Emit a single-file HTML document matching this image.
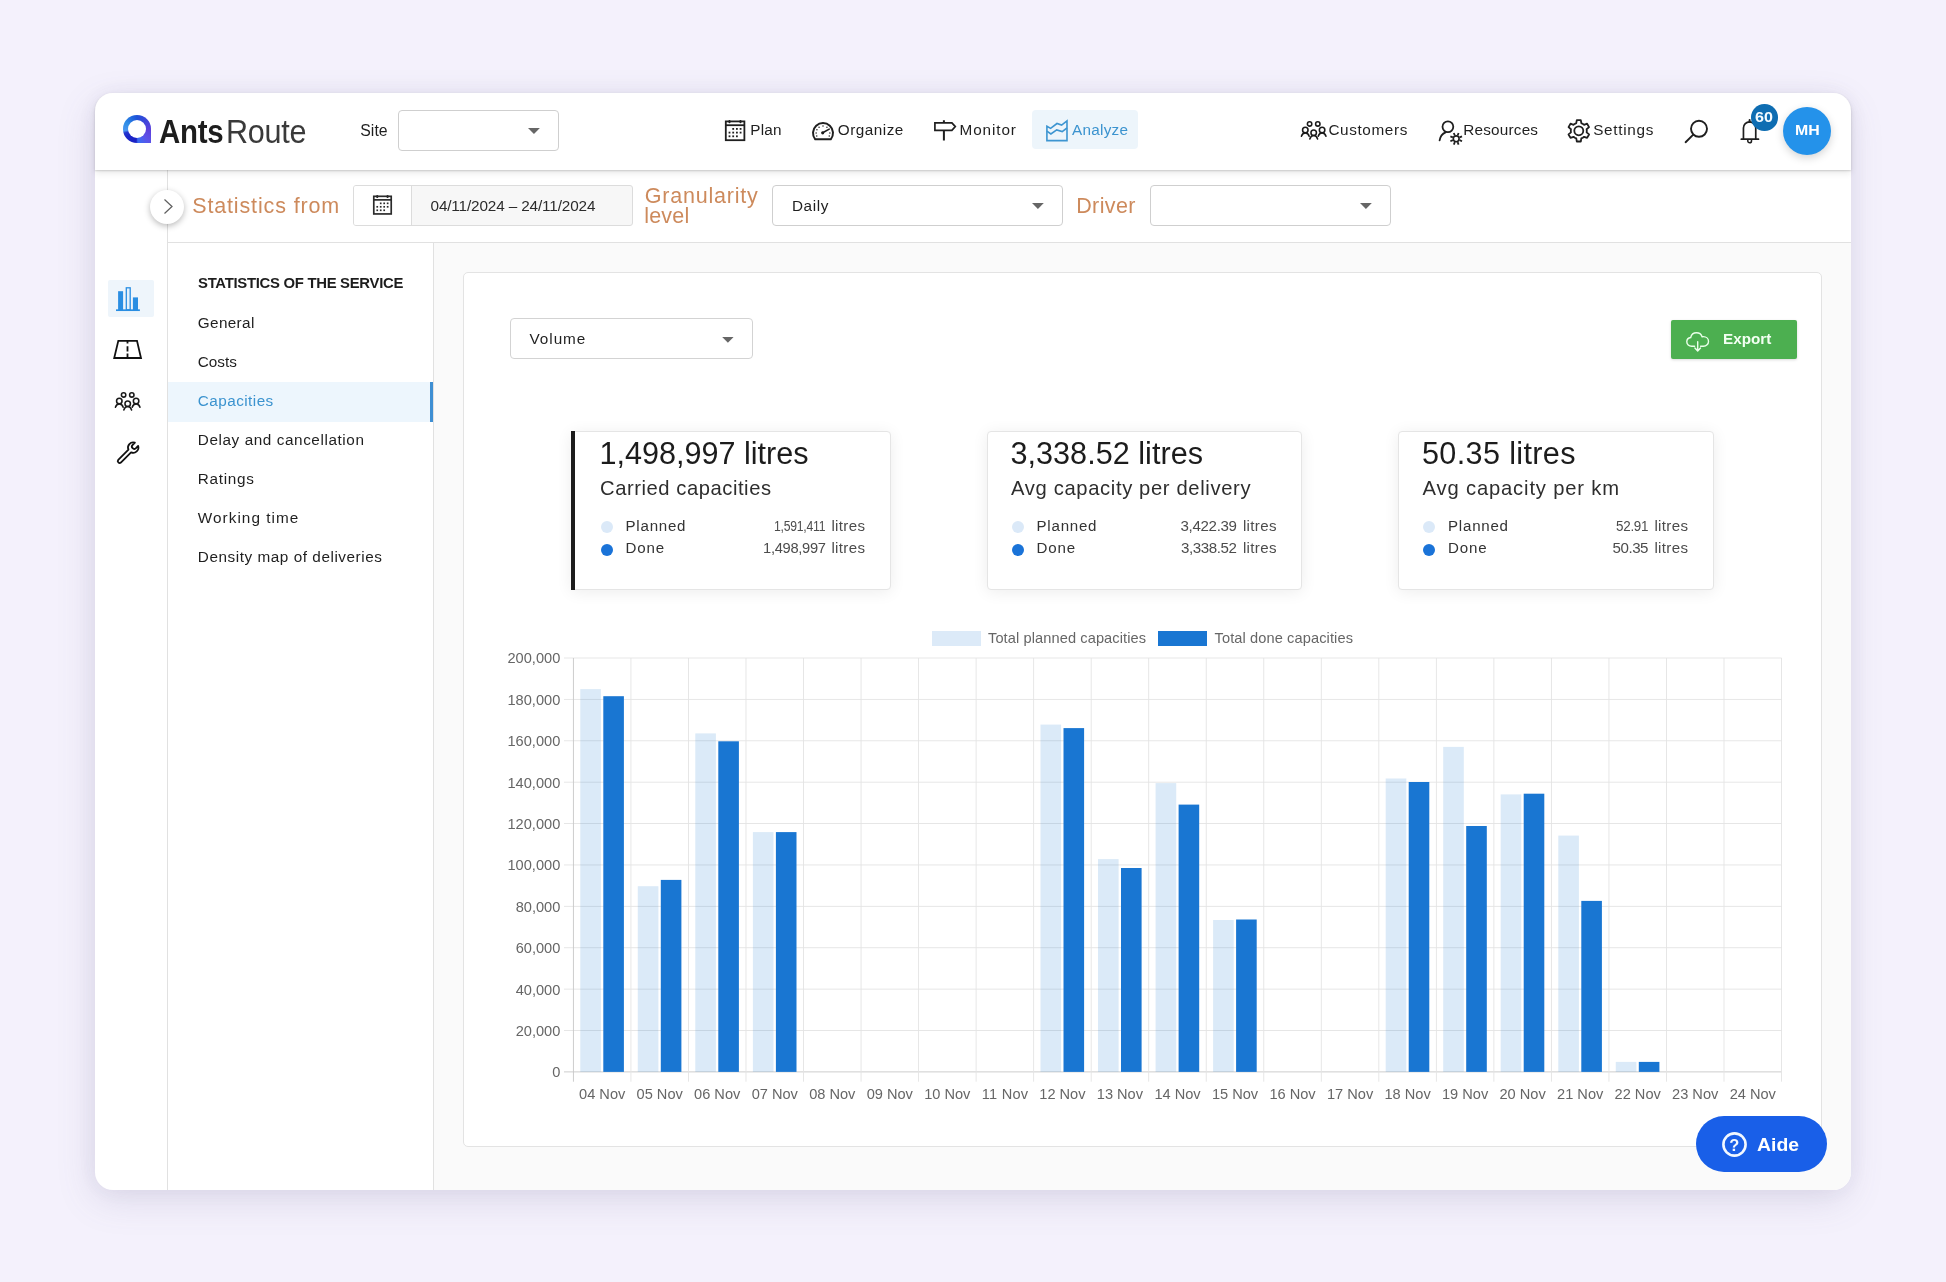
<!DOCTYPE html>
<html lang="en"><head><meta charset="utf-8"><title>AntsRoute - Statistics</title>
<style>
*{margin:0;padding:0;box-sizing:border-box}
html,body{width:1946px;height:1282px;overflow:hidden;font-family:"Liberation Sans",sans-serif}
body{position:relative;will-change:transform;background:#f4f1fc;font-family:"Liberation Sans",sans-serif;color:#222}
body>div,body>svg{position:absolute}
.t{position:absolute;white-space:nowrap;line-height:1;display:block}
svg{overflow:visible}

</style></head>
<body>
<div style="left:95px;top:93px;width:1756px;height:1097px;background:#fff;border-radius:18px;box-shadow:-3px 11px 36px rgba(100,96,140,.15),0 0 24px rgba(100,96,140,.07);"></div>
<div style="left:434px;top:243px;width:1417px;height:947px;background:#fafafa;border-bottom-right-radius:18px;"></div>
<div style="left:167px;top:170px;width:1px;height:1020px;background:#e1e1e1;"></div>
<div style="left:433px;top:243px;width:1px;height:947px;background:#e1e1e1;"></div>
<div style="left:168px;top:242px;width:1683px;height:1px;background:#e1e1e1;"></div>
<div style="left:95px;top:93px;width:1756px;height:77px;background:#fff;border-radius:18px 18px 0 0;box-shadow:0 1px 2px rgba(0,0,0,.15),0 3px 7px rgba(0,0,0,.09);"></div>
<div style="left:122.9px;top:114.9px;width:28.3px;height:27.7px;border-radius:50% 50% 0 50%;background:conic-gradient(from 0deg at 50% 50%,#1f52d8 0deg,#3d45d9 45deg,#5e40dc 95deg,#5c52e8 135deg,#4068f2 165deg,#3a6cf0 176deg,#1a20c4 184deg,#1c26c8 230deg,#2436d0 252deg,#4a96f0 262deg,#2f8ee6 300deg,#2068de 335deg,#1f52d8 360deg);"></div>
<div style="left:127.9px;top:119.6px;width:18.2px;height:18.2px;border-radius:50%;background:#fff;"></div>
<span class="t" style="font-size: 32.3px; color: rgb(29, 29, 29); font-weight: 700; letter-spacing: -0.3px; left: 158.6px; top: 116px; transform-origin: 0px 0px; transform: scaleX(0.9114);">Ants</span>
<span class="t" style="font-size: 32.3px; color: rgb(58, 58, 58); letter-spacing: -0.3px; left: 226.2px; top: 116px; transform-origin: 0px 0px; transform: scaleX(0.946);">Route</span>
<span class="t" style="font-size: 15.8px; color: rgb(31, 31, 31); letter-spacing: 0.02px; left: 360.3px; top: 123px;">Site</span>
<div style="left:398px;top:110px;width:161px;height:41px;background:#fff;border:1px solid #cfcfcf;border-radius:4px;"></div>
<svg style="left:527.5px;top:128.1px" width="11.9" height="6" viewBox="0 0 12 6"><path d="M0 0H12L6 6Z" fill="#666"></path></svg>
<span class="t" style="font-size: 15.3px; color: rgb(31, 31, 31); letter-spacing: 0.19px; left: 750.3px; top: 122px;">Plan</span>
<span class="t" style="font-size: 15.3px; color: rgb(31, 31, 31); letter-spacing: 0.5px; left: 837.8px; top: 122px;">Organize</span>
<span class="t" style="font-size: 15.3px; color: rgb(31, 31, 31); letter-spacing: 0.9px; left: 959.5px; top: 122px;">Monitor</span>
<div style="left:1032px;top:110px;width:105.8px;height:38.8px;background:#edf5fb;border-radius:4px;"></div>
<span class="t" style="font-size: 15.3px; color: rgb(59, 147, 207); letter-spacing: 0.26px; left: 1072px; top: 122px;">Analyze</span>
<span class="t" style="font-size: 15.3px; color: rgb(31, 31, 31); letter-spacing: 0.63px; left: 1328.4px; top: 122px;">Customers</span>
<span class="t" style="font-size: 15.3px; color: rgb(31, 31, 31); letter-spacing: 0.2px; left: 1463.3px; top: 122px;">Resources</span>
<span class="t" style="font-size: 15.3px; color: rgb(31, 31, 31); letter-spacing: 0.7px; left: 1593.2px; top: 122px;">Settings</span>
<svg style="left:724.5px;top:119.7px" width="20.2" height="21.0" viewBox="0 0 20.2 21"><rect x="0.8" y="1.4" width="18.6" height="18.8" fill="none" stroke="#1f1f1f" stroke-width="1.8"></rect><path d="M0.8 5.2H19.4" stroke="#1f1f1f" stroke-width="1.8"></path><rect x="3.5" y="0" width="2" height="3.2" rx="0.9" fill="#1f1f1f"></rect><rect x="14.5" y="0" width="2" height="3.2" rx="0.9" fill="#1f1f1f"></rect><rect x="7.299999999999999" y="8.0" width="1.8" height="1.8" fill="#1f1f1f"></rect><rect x="11.0" y="8.0" width="1.8" height="1.8" fill="#1f1f1f"></rect><rect x="14.7" y="8.0" width="1.8" height="1.8" fill="#1f1f1f"></rect><rect x="3.6" y="11.7" width="1.8" height="1.8" fill="#1f1f1f"></rect><rect x="7.299999999999999" y="11.7" width="1.8" height="1.8" fill="#1f1f1f"></rect><rect x="11.0" y="11.7" width="1.8" height="1.8" fill="#1f1f1f"></rect><rect x="14.7" y="11.7" width="1.8" height="1.8" fill="#1f1f1f"></rect><rect x="3.6" y="15.4" width="1.8" height="1.8" fill="#1f1f1f"></rect><rect x="7.299999999999999" y="15.4" width="1.8" height="1.8" fill="#1f1f1f"></rect><rect x="11.0" y="15.4" width="1.8" height="1.8" fill="#1f1f1f"></rect></svg>
<svg style="left:811.7px;top:122.0px" width="22" height="19" viewBox="0 0 22 19"><path d="M3.23 17.3 A10.0 10.0 0 1 1 18.77 17.3 Z" fill="none" stroke="#1f1f1f" stroke-width="2.0" stroke-linejoin="round"></path><circle cx="10.7" cy="10.8" r="1.6" fill="#1f1f1f"></circle><path d="M10.7 10.8L17.2 7.1" stroke="#1f1f1f" stroke-width="1.6" stroke-linecap="round"></path><circle cx="4.75" cy="13.92" r="0.75" fill="#1f1f1f"></circle><circle cx="4.10" cy="11.00" r="0.75" fill="#1f1f1f"></circle><circle cx="4.91" cy="7.76" r="0.75" fill="#1f1f1f"></circle><circle cx="7.04" cy="5.35" r="0.75" fill="#1f1f1f"></circle><circle cx="11.00" cy="4.10" r="0.75" fill="#1f1f1f"></circle><circle cx="14.96" cy="5.35" r="0.75" fill="#1f1f1f"></circle><circle cx="17.90" cy="11.00" r="0.75" fill="#1f1f1f"></circle><circle cx="17.25" cy="13.92" r="0.75" fill="#1f1f1f"></circle></svg>
<svg style="left:934px;top:120px" width="22" height="20.4" viewBox="0 0 22 20.4"><path d="M0.9 2.9H17.9L21.3 6.6L17.9 10.3H0.9Z" fill="none" stroke="#1f1f1f" stroke-width="1.7" stroke-linejoin="miter"></path><path d="M9.9 0.3V2.9M9.9 10.3V20.4" stroke="#1f1f1f" stroke-width="2"></path></svg>
<svg style="left:1045.8px;top:120.1px" width="22" height="21.2" viewBox="0 0 22 21.2"><path d="M0.9 6.3L4.6 8.4L11 3.5L15.6 5.1L21 0.9V20.6H0.9Z" fill="none" stroke="#3d95d1" stroke-width="1.6" stroke-linejoin="miter"></path><path d="M0.9 11.2L4.9 14L10.7 9.9L16.2 11.6L21 8" fill="none" stroke="#3d95d1" stroke-width="1.6"></path></svg>
<svg style="left:1300.6px;top:121.1px" width="26" height="18.8" viewBox="0 0 26 18.8"><circle cx="8.6" cy="2.95" r="2.2" fill="none" stroke="#1a1a1a" stroke-width="1.55"></circle><circle cx="16.8" cy="2.95" r="2.2" fill="none" stroke="#1a1a1a" stroke-width="1.55"></circle><circle cx="4.3" cy="9.0" r="2.75" fill="none" stroke="#1a1a1a" stroke-width="1.55"></circle><path d="M0.3999999999999999 15.3Q1.5 11.9 4.3 11.9Q7.1 11.9 8.2 15.3" fill="none" stroke="#1a1a1a" stroke-width="1.55" stroke-linecap="round"></path><circle cx="12.7" cy="11.7" r="2.75" fill="none" stroke="#1a1a1a" stroke-width="1.55"></circle><path d="M8.799999999999999 18.0Q9.899999999999999 14.6 12.7 14.6Q15.5 14.6 16.599999999999998 18.0" fill="none" stroke="#1a1a1a" stroke-width="1.55" stroke-linecap="round"></path><circle cx="21.1" cy="9.0" r="2.75" fill="none" stroke="#1a1a1a" stroke-width="1.55"></circle><path d="M17.200000000000003 15.3Q18.3 11.9 21.1 11.9Q23.900000000000002 11.9 25.0 15.3" fill="none" stroke="#1a1a1a" stroke-width="1.55" stroke-linecap="round"></path></svg>
<svg style="left:1438px;top:119px" width="26" height="27" viewBox="0 0 26 27"><circle cx="9.90" cy="7.70" r="5.4" fill="none" stroke="#1f1f1f" stroke-width="1.8"></circle><path d="M7.60 13.30C4.30 14.60 2.20 17.40 1.60 21.40" fill="none" stroke="#1f1f1f" stroke-width="1.8" stroke-linecap="round"></path><path d="M21.53 21.18L24.02 22.21" stroke="#1f1f1f" stroke-width="1.8"></path><path d="M19.58 23.13L20.61 25.62" stroke="#1f1f1f" stroke-width="1.8"></path><path d="M16.82 23.13L15.79 25.62" stroke="#1f1f1f" stroke-width="1.8"></path><path d="M14.87 21.18L12.38 22.21" stroke="#1f1f1f" stroke-width="1.8"></path><path d="M14.87 18.42L12.38 17.39" stroke="#1f1f1f" stroke-width="1.8"></path><path d="M16.82 16.47L15.79 13.98" stroke="#1f1f1f" stroke-width="1.8"></path><path d="M19.58 16.47L20.61 13.98" stroke="#1f1f1f" stroke-width="1.8"></path><path d="M21.53 18.42L24.02 17.39" stroke="#1f1f1f" stroke-width="1.8"></path><circle cx="18.20" cy="19.80" r="2.9" fill="none" stroke="#1f1f1f" stroke-width="1.6"></circle></svg>
<svg style="left:1566.6px;top:118.9px" width="23.6" height="23.6" viewBox="0 0 23.6 23.6"><path d="M7.80 4.87 L9.26 4.21 L9.81 1.08 L13.79 1.08 L14.34 4.21 L15.80 4.87 L17.10 5.81 L20.09 4.72 L22.07 8.16 L19.64 10.21 L19.80 11.80 L19.64 13.39 L22.07 15.44 L20.09 18.88 L17.10 17.79 L15.80 18.73 L14.34 19.39 L13.79 22.52 L9.81 22.52 L9.26 19.39 L7.80 18.73 L6.50 17.79 L3.51 18.88 L1.53 15.44 L3.96 13.39 L3.80 11.80 L3.96 10.21 L1.53 8.16 L3.51 4.72 L6.50 5.81Z" fill="none" stroke="#1f1f1f" stroke-width="1.8" stroke-linejoin="round"></path><circle cx="11.8" cy="11.8" r="4.5" fill="none" stroke="#1f1f1f" stroke-width="1.8"></circle></svg>
<svg style="left:1684px;top:118px" width="25" height="25" viewBox="0 0 25 25"><circle cx="15.00" cy="10.80" r="8.0" fill="none" stroke="#1f1f1f" stroke-width="1.9"></circle><path d="M9.00 16.90L1.60 24.20" stroke="#1f1f1f" stroke-width="1.9" stroke-linecap="round"></path></svg>
<svg style="left:1740px;top:119px" width="20" height="25" viewBox="0 0 20 25"><path d="M3.45 20.00V9.00A6.15 6.15 0 0 1 15.75 9.00V20.00" fill="none" stroke="#1f1f1f" stroke-width="1.7"></path><path d="M1.30 20.20H18.50" stroke="#1f1f1f" stroke-width="1.7" stroke-linecap="round"></path><path d="M7.80 21.00V22.00A1.85 1.85 0 0 0 11.50 22.00V21.00" fill="none" stroke="#1f1f1f" stroke-width="1.5"></path><path d="M9.60 0.90V3.00" stroke="#1f1f1f" stroke-width="2" stroke-linecap="round"></path></svg>
<div style="left:1751.0px;top:104.0px;width:26.6px;height:26.6px;background:#0e6db2;border-radius:50%;"></div>
<span class="t" style="font-size: 14.3px; color: rgb(244, 251, 255); font-weight: 700; left: 1755.4px; top: 110px; transform-origin: 0px 0px; transform: scaleX(1.1253);">60</span>
<div style="left:1783px;top:106.5px;width:48px;height:48px;background:#2492ea;border-radius:50%;box-shadow:0 3px 9px rgba(0,0,0,.17);"></div>
<span class="t" style="font-size: 15.1px; color: rgb(255, 255, 255); font-weight: 700; left: 1794.7px; top: 122px; transform-origin: 0px 0px; transform: scaleX(1.0518);">MH</span>
<div style="left:150px;top:189.6px;width:34px;height:34px;background:#fff;border-radius:50%;box-shadow:0 2px 6px rgba(0,0,0,.28);"></div>
<svg style="left:163px;top:199px" width="10" height="15" viewBox="0 0 10 15"><path d="M1.5 0.5L9 7.5L1.5 14.5" fill="none" stroke="#606060" stroke-width="1.25"></path></svg>
<span class="t" style="font-size: 21.5px; color: rgb(205, 138, 92); letter-spacing: 0.86px; left: 192.2px; top: 196px;">Statistics from</span>
<div style="left:353px;top:185px;width:280px;height:41px;background:#f7f7f7;border:1px solid #dcdcdc;border-radius:3px;"></div>
<div style="left:354px;top:186px;width:57.5px;height:39px;background:#fff;border-right:1px solid #dcdcdc;border-radius:2px 0 0 2px;"></div>
<svg style="left:373px;top:194.8px" width="19.0" height="19.7" viewBox="0 0 20.2 21"><rect x="0.8" y="1.4" width="18.6" height="18.8" fill="none" stroke="#2b2b2b" stroke-width="1.8"></rect><path d="M0.8 5.2H19.4" stroke="#2b2b2b" stroke-width="1.8"></path><rect x="3.5" y="0" width="2" height="3.2" rx="0.9" fill="#2b2b2b"></rect><rect x="14.5" y="0" width="2" height="3.2" rx="0.9" fill="#2b2b2b"></rect><rect x="7.299999999999999" y="8.0" width="1.8" height="1.8" fill="#2b2b2b"></rect><rect x="11.0" y="8.0" width="1.8" height="1.8" fill="#2b2b2b"></rect><rect x="14.7" y="8.0" width="1.8" height="1.8" fill="#2b2b2b"></rect><rect x="3.6" y="11.7" width="1.8" height="1.8" fill="#2b2b2b"></rect><rect x="7.299999999999999" y="11.7" width="1.8" height="1.8" fill="#2b2b2b"></rect><rect x="11.0" y="11.7" width="1.8" height="1.8" fill="#2b2b2b"></rect><rect x="14.7" y="11.7" width="1.8" height="1.8" fill="#2b2b2b"></rect><rect x="3.6" y="15.4" width="1.8" height="1.8" fill="#2b2b2b"></rect><rect x="7.299999999999999" y="15.4" width="1.8" height="1.8" fill="#2b2b2b"></rect><rect x="11.0" y="15.4" width="1.8" height="1.8" fill="#2b2b2b"></rect></svg>
<span class="t" style="font-size: 15.3px; color: rgb(43, 43, 43); letter-spacing: -0.13px; left: 430.5px; top: 198px;">04/11/2024 – 24/11/2024</span>
<span class="t" style="font-size: 21.5px; color: rgb(205, 138, 92); letter-spacing: 0.78px; left: 644.8px; top: 186px;">Granularity</span>
<span class="t" style="font-size: 21.5px; color: rgb(205, 138, 92); letter-spacing: 0.2px; left: 644.2px; top: 206px;">level</span>
<div style="left:772px;top:185px;width:291px;height:41px;background:#fff;border:1px solid #cfcfcf;border-radius:4px;"></div>
<span class="t" style="font-size: 15.3px; color: rgb(31, 31, 31); letter-spacing: 0.63px; left: 791.9px; top: 198px;">Daily</span>
<svg style="left:1032.3px;top:203px" width="11.8" height="5.9" viewBox="0 0 12 6"><path d="M0 0H12L6 6Z" fill="#666"></path></svg>
<div style="left:1350.3px;top:208.2px;width:1.2px;height:1.2px;background:#888;"></div>
<span class="t" style="font-size: 21.5px; color: rgb(205, 138, 92); letter-spacing: 0.39px; left: 1076.2px; top: 196px;">Driver</span>
<div style="left:1150px;top:185px;width:241px;height:41px;background:#fff;border:1px solid #cfcfcf;border-radius:4px;"></div>
<svg style="left:1359.8px;top:203px" width="11.8" height="5.9" viewBox="0 0 12 6"><path d="M0 0H12L6 6Z" fill="#666"></path></svg>
<div style="left:107.6px;top:280px;width:46.3px;height:37.3px;background:#eef5fb;border-radius:2px;"></div>
<svg style="left:116px;top:286.6px" width="24" height="24.2" viewBox="0 0 24 24.2"><rect x="2.1" y="4.2" width="5" height="18.8" fill="#2a8ee2"></rect><rect x="10.3" y="0.8" width="3.9" height="22" fill="#e4f1fc" stroke="#2a8ee2" stroke-width="1.3"></rect><rect x="16.9" y="10.4" width="5.1" height="12.6" fill="#2a8ee2"></rect><path d="M0 23.2H23.9" stroke="#2a8ee2" stroke-width="1.7"></path></svg>
<svg style="left:113.3px;top:339.9px" width="29" height="19" viewBox="0 0 29 19"><path d="M5.3 0.9H24L28 18H1.2Z" fill="none" stroke="#111" stroke-width="1.8" stroke-linejoin="miter"></path><path d="M14.5 0.9V3.6M14.5 6.3V11.4M14.5 13.4V18" stroke="#111" stroke-width="1.8"></path></svg>
<svg style="left:115.2px;top:392.1px" width="26" height="18.8" viewBox="0 0 26 18.8"><circle cx="8.6" cy="2.95" r="2.2" fill="none" stroke="#1a1a1a" stroke-width="1.55"></circle><circle cx="16.8" cy="2.95" r="2.2" fill="none" stroke="#1a1a1a" stroke-width="1.55"></circle><circle cx="4.3" cy="9.0" r="2.75" fill="none" stroke="#1a1a1a" stroke-width="1.55"></circle><path d="M0.3999999999999999 15.3Q1.5 11.9 4.3 11.9Q7.1 11.9 8.2 15.3" fill="none" stroke="#1a1a1a" stroke-width="1.55" stroke-linecap="round"></path><circle cx="12.7" cy="11.7" r="2.75" fill="none" stroke="#1a1a1a" stroke-width="1.55"></circle><path d="M8.799999999999999 18.0Q9.899999999999999 14.6 12.7 14.6Q15.5 14.6 16.599999999999998 18.0" fill="none" stroke="#1a1a1a" stroke-width="1.55" stroke-linecap="round"></path><circle cx="21.1" cy="9.0" r="2.75" fill="none" stroke="#1a1a1a" stroke-width="1.55"></circle><path d="M17.200000000000003 15.3Q18.3 11.9 21.1 11.9Q23.900000000000002 11.9 25.0 15.3" fill="none" stroke="#1a1a1a" stroke-width="1.55" stroke-linecap="round"></path></svg>
<svg style="left:116px;top:440px" width="24" height="24" viewBox="0 0 24 24"><path d="M22.12 5.91A5.2 5.2 0 0 1 15.07 12.34L4.86 22.55A1.85 1.85 0 0 1 2.25 19.94L12.46 9.73A5.2 5.2 0 0 1 18.89 2.68L16.49 5.09A2.28 2.28 0 0 0 19.71 8.31Z" fill="none" stroke="#111" stroke-width="1.8" stroke-linejoin="round"></path></svg>
<span class="t" style="font-size: 15.4px; color: rgb(29, 29, 29); font-weight: 700; letter-spacing: -0.3px; left: 197.6px; top: 275px; transform-origin: 0px 0px; transform: scaleX(0.9662);">STATISTICS OF THE SERVICE</span>
<div style="left:168px;top:382px;width:265px;height:39.5px;background:#edf6fd;"></div>
<div style="left:430px;top:382px;width:3px;height:39.5px;background:#3f8fd3;"></div>
<span class="t" style="font-size: 15.3px; color: rgb(31, 31, 31); letter-spacing: 0.35px; left: 197.8px; top: 315px;">General</span>
<span class="t" style="font-size: 15.3px; color: rgb(31, 31, 31); letter-spacing: -0.03px; left: 197.8px; top: 354px;">Costs</span>
<span class="t" style="font-size: 15.3px; color: rgb(59, 147, 207); letter-spacing: 0.45px; left: 197.8px; top: 393px;">Capacities</span>
<span class="t" style="font-size: 15.3px; color: rgb(31, 31, 31); letter-spacing: 0.58px; left: 197.8px; top: 432px;">Delay and cancellation</span>
<span class="t" style="font-size: 15.3px; color: rgb(31, 31, 31); letter-spacing: 0.69px; left: 197.8px; top: 471px;">Ratings</span>
<span class="t" style="font-size: 15.3px; color: rgb(31, 31, 31); letter-spacing: 1.05px; left: 197.8px; top: 510px;">Working time</span>
<span class="t" style="font-size: 15.3px; color: rgb(31, 31, 31); letter-spacing: 0.55px; left: 197.8px; top: 549px;">Density map of deliveries</span>
<div style="left:463px;top:272px;width:1359px;height:875px;background:#fff;border:1px solid #e3e3e3;border-radius:5px;"></div>
<div style="left:510px;top:318.3px;width:243px;height:40.3px;background:#fff;border:1px solid #d3d3d3;border-radius:4px;"></div>
<span class="t" style="font-size: 15.3px; color: rgb(31, 31, 31); letter-spacing: 0.99px; left: 529.4px; top: 331px;">Volume</span>
<svg style="left:722px;top:337.1px" width="11.8" height="5.7" viewBox="0 0 12 6"><path d="M0 0H12L6 6Z" fill="#666"></path></svg>
<div style="left:1670.5px;top:319.5px;width:126.5px;height:39.5px;background:#4caf50;border-radius:2px;box-shadow:0 1px 3px rgba(0,0,0,.15);"></div>
<svg style="left:1686px;top:331.6px" width="23.5" height="20" viewBox="0 0 23.5 20"><path d="M8.6 14.2H5.6C2.9 14.2 0.8 12.2 0.8 9.8C0.8 7.6 2.5 5.8 4.7 5.5C5.3 2.8 7.6 0.8 10.5 0.8C13.1 0.8 15.3 2.4 16.1 4.7C16.5 4.6 16.9 4.6 17.3 4.6C20.2 4.6 22.5 6.7 22.5 9.4C22.5 12 20.3 14.2 17.5 14.2H14.6" fill="none" stroke="#eaffea" stroke-width="1.4" stroke-linecap="round"></path><path d="M11.7 9.8V18.6M8.9 16L11.7 19L14.5 16" fill="none" stroke="#eaffea" stroke-width="1.4" stroke-linecap="round" stroke-linejoin="round"></path></svg>
<span class="t" style="font-size: 14.3px; color: rgb(242, 255, 242); font-weight: 700; left: 1722.6px; top: 332px; transform-origin: 0px 0px; transform: scaleX(1.0667);">Export</span>
<div style="left:571px;top:431px;width:319.5px;height:159px;background:#fff;border:1px solid #e5e5e5;border-radius:4px;box-shadow:0 2px 16px rgba(0,0,0,.075);"></div>
<div style="left:571px;top:431px;width:4.3px;height:159px;background:#1c1c1c;"></div>
<span class="t" style="font-size: 30.6px; color: rgb(28, 28, 28); letter-spacing: -0.01px; left: 599.5px; top: 438px;">1,498,997 litres</span>
<span class="t" style="font-size: 20.2px; color: rgb(46, 46, 46); letter-spacing: 0.55px; left: 600.1px; top: 478px;">Carried capacities</span>
<div style="left:600.5px;top:521.2px;width:12px;height:12px;background:#dbe9f8;border-radius:50%;"></div>
<div style="left:600.5px;top:543.5px;width:12px;height:12px;background:#1a73d8;border-radius:50%;"></div>
<span class="t" style="font-size: 15.1px; color: rgb(51, 51, 51); letter-spacing: 0.77px; left: 625.5px; top: 518px;">Planned</span>
<span class="t" style="font-size: 15.1px; color: rgb(51, 51, 51); letter-spacing: 0.84px; left: 625.5px; top: 540px;">Done</span>
<span class="t" style="font-size: 15.1px; color: rgb(76, 76, 76); letter-spacing: 0.35px; left: 831.4px; top: 518px;">litres</span>
<span class="t" style="font-size: 15.1px; color: rgb(76, 76, 76); letter-spacing: -0.3px; left: 774px; top: 518px; transform-origin: 0px 0px; transform: scaleX(0.8094);">1,591,411</span>
<span class="t" style="font-size: 15.1px; color: rgb(76, 76, 76); letter-spacing: 0.35px; left: 831.4px; top: 540px;">litres</span>
<span class="t" style="font-size: 15.1px; color: rgb(76, 76, 76); letter-spacing: -0.3px; left: 762.5px; top: 540px; transform-origin: 0px 0px; transform: scaleX(0.9729);">1,498,997</span>
<div style="left:986.5px;top:431px;width:315.5px;height:159px;background:#fff;border:1px solid #e5e5e5;border-radius:4px;box-shadow:0 2px 16px rgba(0,0,0,.075);"></div>
<span class="t" style="font-size: 30.6px; color: rgb(28, 28, 28); letter-spacing: 0.02px; left: 1010.5px; top: 438px;">3,338.52 litres</span>
<span class="t" style="font-size: 20.2px; color: rgb(46, 46, 46); letter-spacing: 0.64px; left: 1011.1px; top: 478px;">Avg capacity per delivery</span>
<div style="left:1011.5px;top:521.2px;width:12px;height:12px;background:#dbe9f8;border-radius:50%;"></div>
<div style="left:1011.5px;top:543.5px;width:12px;height:12px;background:#1a73d8;border-radius:50%;"></div>
<span class="t" style="font-size: 15.1px; color: rgb(51, 51, 51); letter-spacing: 0.77px; left: 1036.5px; top: 518px;">Planned</span>
<span class="t" style="font-size: 15.1px; color: rgb(51, 51, 51); letter-spacing: 0.84px; left: 1036.5px; top: 540px;">Done</span>
<span class="t" style="font-size: 15.1px; color: rgb(76, 76, 76); letter-spacing: 0.35px; left: 1242.9px; top: 518px;">litres</span>
<span class="t" style="font-size: 15.1px; color: rgb(76, 76, 76); letter-spacing: -0.32px; left: 1180.5px; top: 518px;">3,422.39</span>
<span class="t" style="font-size: 15.1px; color: rgb(76, 76, 76); letter-spacing: 0.35px; left: 1242.9px; top: 540px;">litres</span>
<span class="t" style="font-size: 15.1px; color: rgb(76, 76, 76); letter-spacing: -0.4px; left: 1181px; top: 540px;">3,338.52</span>
<div style="left:1398px;top:431px;width:315.5px;height:159px;background:#fff;border:1px solid #e5e5e5;border-radius:4px;box-shadow:0 2px 16px rgba(0,0,0,.075);"></div>
<span class="t" style="font-size: 30.6px; color: rgb(28, 28, 28); letter-spacing: 0.35px; left: 1422px; top: 438px;">50.35 litres</span>
<span class="t" style="font-size: 20.2px; color: rgb(46, 46, 46); letter-spacing: 0.84px; left: 1422.6px; top: 478px;">Avg capacity per km</span>
<div style="left:1423.0px;top:521.2px;width:12px;height:12px;background:#dbe9f8;border-radius:50%;"></div>
<div style="left:1423.0px;top:543.5px;width:12px;height:12px;background:#1a73d8;border-radius:50%;"></div>
<span class="t" style="font-size: 15.1px; color: rgb(51, 51, 51); letter-spacing: 0.77px; left: 1448px; top: 518px;">Planned</span>
<span class="t" style="font-size: 15.1px; color: rgb(51, 51, 51); letter-spacing: 0.84px; left: 1448px; top: 540px;">Done</span>
<span class="t" style="font-size: 15.1px; color: rgb(76, 76, 76); letter-spacing: 0.35px; left: 1654.4px; top: 518px;">litres</span>
<span class="t" style="font-size: 15.1px; color: rgb(76, 76, 76); letter-spacing: -0.3px; left: 1616px; top: 518px; transform-origin: 0px 0px; transform: scaleX(0.8884);">52.91</span>
<span class="t" style="font-size: 15.1px; color: rgb(76, 76, 76); letter-spacing: 0.35px; left: 1654.4px; top: 540px;">litres</span>
<span class="t" style="font-size: 15.1px; color: rgb(76, 76, 76); letter-spacing: -0.45px; left: 1612.5px; top: 540px;">50.35</span>
<div style="left:932px;top:631px;width:48.5px;height:14.5px;background:#dceaf8;"></div>
<span class="t" style="font-size: 14.6px; color: rgb(102, 102, 102); letter-spacing: 0.1px; left: 988px; top: 631px;">Total planned capacities</span>
<div style="left:1158px;top:631px;width:49px;height:14.5px;background:#1976d2;"></div>
<span class="t" style="font-size: 14.6px; color: rgb(102, 102, 102); letter-spacing: 0.11px; left: 1214.5px; top: 631px;">Total done capacities</span>
<svg style="left:0;top:0" width="1946" height="1282" viewBox="0 0 1946 1282"><rect x="564" y="657.55" width="1217.6" height="0.9" fill="#e4e4e4"></rect><rect x="564" y="698.94" width="1217.6" height="0.9" fill="#e4e4e4"></rect><rect x="564" y="740.33" width="1217.6" height="0.9" fill="#e4e4e4"></rect><rect x="564" y="781.72" width="1217.6" height="0.9" fill="#e4e4e4"></rect><rect x="564" y="823.11" width="1217.6" height="0.9" fill="#e4e4e4"></rect><rect x="564" y="864.50" width="1217.6" height="0.9" fill="#e4e4e4"></rect><rect x="564" y="905.89" width="1217.6" height="0.9" fill="#e4e4e4"></rect><rect x="564" y="947.28" width="1217.6" height="0.9" fill="#e4e4e4"></rect><rect x="564" y="988.67" width="1217.6" height="0.9" fill="#e4e4e4"></rect><rect x="564" y="1030.06" width="1217.6" height="0.9" fill="#e4e4e4"></rect><rect x="564" y="1071.45" width="1217.6" height="0.9" fill="#c8c8c8"></rect><rect x="572.95" y="658.0" width="0.9" height="423.7" fill="#c8c8c8"></rect><rect x="630.48" y="658.0" width="0.9" height="423.7" fill="#e4e4e4"></rect><rect x="688.01" y="658.0" width="0.9" height="423.7" fill="#e4e4e4"></rect><rect x="745.54" y="658.0" width="0.9" height="423.7" fill="#e4e4e4"></rect><rect x="803.07" y="658.0" width="0.9" height="423.7" fill="#e4e4e4"></rect><rect x="860.60" y="658.0" width="0.9" height="423.7" fill="#e4e4e4"></rect><rect x="918.13" y="658.0" width="0.9" height="423.7" fill="#e4e4e4"></rect><rect x="975.66" y="658.0" width="0.9" height="423.7" fill="#e4e4e4"></rect><rect x="1033.19" y="658.0" width="0.9" height="423.7" fill="#e4e4e4"></rect><rect x="1090.72" y="658.0" width="0.9" height="423.7" fill="#e4e4e4"></rect><rect x="1148.25" y="658.0" width="0.9" height="423.7" fill="#e4e4e4"></rect><rect x="1205.78" y="658.0" width="0.9" height="423.7" fill="#e4e4e4"></rect><rect x="1263.31" y="658.0" width="0.9" height="423.7" fill="#e4e4e4"></rect><rect x="1320.84" y="658.0" width="0.9" height="423.7" fill="#e4e4e4"></rect><rect x="1378.37" y="658.0" width="0.9" height="423.7" fill="#e4e4e4"></rect><rect x="1435.90" y="658.0" width="0.9" height="423.7" fill="#e4e4e4"></rect><rect x="1493.43" y="658.0" width="0.9" height="423.7" fill="#e4e4e4"></rect><rect x="1550.96" y="658.0" width="0.9" height="423.7" fill="#e4e4e4"></rect><rect x="1608.49" y="658.0" width="0.9" height="423.7" fill="#e4e4e4"></rect><rect x="1666.02" y="658.0" width="0.9" height="423.7" fill="#e4e4e4"></rect><rect x="1723.55" y="658.0" width="0.9" height="423.7" fill="#e4e4e4"></rect><rect x="1781.08" y="658.0" width="0.9" height="423.7" fill="#e4e4e4"></rect><rect x="580.3" y="689.1" width="20.6" height="382.8" fill="rgba(25,118,210,.155)"></rect><rect x="603.3" y="696.2" width="20.6" height="375.7" fill="#1976d2"></rect><rect x="637.8" y="886.2" width="20.6" height="185.7" fill="rgba(25,118,210,.155)"></rect><rect x="660.8" y="879.9" width="20.6" height="192.0" fill="#1976d2"></rect><rect x="695.3" y="733.4" width="20.6" height="338.5" fill="rgba(25,118,210,.155)"></rect><rect x="718.3" y="741.3" width="20.6" height="330.6" fill="#1976d2"></rect><rect x="752.9" y="832.1" width="20.6" height="239.8" fill="rgba(25,118,210,.155)"></rect><rect x="775.9" y="832.1" width="20.6" height="239.8" fill="#1976d2"></rect><rect x="1040.5" y="724.6" width="20.6" height="347.3" fill="rgba(25,118,210,.155)"></rect><rect x="1063.5" y="728.1" width="20.6" height="343.8" fill="#1976d2"></rect><rect x="1098.0" y="859.1" width="20.6" height="212.8" fill="rgba(25,118,210,.155)"></rect><rect x="1121.0" y="868.0" width="20.6" height="203.9" fill="#1976d2"></rect><rect x="1155.6" y="783.1" width="20.6" height="288.8" fill="rgba(25,118,210,.155)"></rect><rect x="1178.6" y="804.6" width="20.6" height="267.3" fill="#1976d2"></rect><rect x="1213.1" y="920.0" width="20.6" height="151.9" fill="rgba(25,118,210,.155)"></rect><rect x="1236.1" y="919.5" width="20.6" height="152.4" fill="#1976d2"></rect><rect x="1385.7" y="778.5" width="20.6" height="293.4" fill="rgba(25,118,210,.155)"></rect><rect x="1408.7" y="782.0" width="20.6" height="289.9" fill="#1976d2"></rect><rect x="1443.2" y="746.9" width="20.6" height="325.0" fill="rgba(25,118,210,.155)"></rect><rect x="1466.2" y="826.0" width="20.6" height="245.9" fill="#1976d2"></rect><rect x="1500.7" y="794.4" width="20.6" height="277.5" fill="rgba(25,118,210,.155)"></rect><rect x="1523.7" y="793.7" width="20.6" height="278.2" fill="#1976d2"></rect><rect x="1558.3" y="835.6" width="20.6" height="236.3" fill="rgba(25,118,210,.155)"></rect><rect x="1581.3" y="900.9" width="20.6" height="171.0" fill="#1976d2"></rect><rect x="1615.8" y="1061.9" width="20.6" height="10.0" fill="rgba(25,118,210,.155)"></rect><rect x="1638.8" y="1061.9" width="20.6" height="10.0" fill="#1976d2"></rect></svg>
<span class="t" style="font-size: 14.6px; color: rgb(102, 102, 102); left: 507.5px; top: 651px;">200,000</span>
<span class="t" style="font-size: 14.6px; color: rgb(102, 102, 102); left: 507.5px; top: 693px;">180,000</span>
<span class="t" style="font-size: 14.6px; color: rgb(102, 102, 102); left: 507.5px; top: 734px;">160,000</span>
<span class="t" style="font-size: 14.6px; color: rgb(102, 102, 102); left: 507.5px; top: 776px;">140,000</span>
<span class="t" style="font-size: 14.6px; color: rgb(102, 102, 102); left: 507.5px; top: 817px;">120,000</span>
<span class="t" style="font-size: 14.6px; color: rgb(102, 102, 102); left: 507.5px; top: 858px;">100,000</span>
<span class="t" style="font-size: 14.6px; color: rgb(102, 102, 102); left: 515.7px; top: 900px;">80,000</span>
<span class="t" style="font-size: 14.6px; color: rgb(102, 102, 102); left: 515.7px; top: 941px;">60,000</span>
<span class="t" style="font-size: 14.6px; color: rgb(102, 102, 102); left: 515.7px; top: 983px;">40,000</span>
<span class="t" style="font-size: 14.6px; color: rgb(102, 102, 102); left: 515.7px; top: 1024px;">20,000</span>
<span class="t" style="font-size: 14.6px; color: rgb(102, 102, 102); left: 552.2px; top: 1065px;">0</span>
<span class="t" style="font-size: 14.6px; color: rgb(102, 102, 102); letter-spacing: -0.01px; left: 579.1px; top: 1087px;">04 Nov</span>
<span class="t" style="font-size: 14.6px; color: rgb(102, 102, 102); letter-spacing: -0.01px; left: 636.6px; top: 1087px;">05 Nov</span>
<span class="t" style="font-size: 14.6px; color: rgb(102, 102, 102); letter-spacing: -0.01px; left: 694.1px; top: 1087px;">06 Nov</span>
<span class="t" style="font-size: 14.6px; color: rgb(102, 102, 102); letter-spacing: -0.01px; left: 751.7px; top: 1087px;">07 Nov</span>
<span class="t" style="font-size: 14.6px; color: rgb(102, 102, 102); letter-spacing: -0.01px; left: 809.2px; top: 1087px;">08 Nov</span>
<span class="t" style="font-size: 14.6px; color: rgb(102, 102, 102); letter-spacing: -0.01px; left: 866.7px; top: 1087px;">09 Nov</span>
<span class="t" style="font-size: 14.6px; color: rgb(102, 102, 102); letter-spacing: -0.01px; left: 924.2px; top: 1087px;">10 Nov</span>
<span class="t" style="font-size: 14.6px; color: rgb(102, 102, 102); letter-spacing: 0.21px; left: 981.8px; top: 1087px;">11 Nov</span>
<span class="t" style="font-size: 14.6px; color: rgb(102, 102, 102); letter-spacing: -0.01px; left: 1039.3px; top: 1087px;">12 Nov</span>
<span class="t" style="font-size: 14.6px; color: rgb(102, 102, 102); letter-spacing: -0.01px; left: 1096.8px; top: 1087px;">13 Nov</span>
<span class="t" style="font-size: 14.6px; color: rgb(102, 102, 102); letter-spacing: -0.01px; left: 1154.4px; top: 1087px;">14 Nov</span>
<span class="t" style="font-size: 14.6px; color: rgb(102, 102, 102); letter-spacing: -0.01px; left: 1211.9px; top: 1087px;">15 Nov</span>
<span class="t" style="font-size: 14.6px; color: rgb(102, 102, 102); letter-spacing: -0.01px; left: 1269.4px; top: 1087px;">16 Nov</span>
<span class="t" style="font-size: 14.6px; color: rgb(102, 102, 102); letter-spacing: -0.01px; left: 1327px; top: 1087px;">17 Nov</span>
<span class="t" style="font-size: 14.6px; color: rgb(102, 102, 102); letter-spacing: -0.01px; left: 1384.5px; top: 1087px;">18 Nov</span>
<span class="t" style="font-size: 14.6px; color: rgb(102, 102, 102); letter-spacing: -0.01px; left: 1442px; top: 1087px;">19 Nov</span>
<span class="t" style="font-size: 14.6px; color: rgb(102, 102, 102); letter-spacing: -0.01px; left: 1499.5px; top: 1087px;">20 Nov</span>
<span class="t" style="font-size: 14.6px; color: rgb(102, 102, 102); letter-spacing: -0.01px; left: 1557.1px; top: 1087px;">21 Nov</span>
<span class="t" style="font-size: 14.6px; color: rgb(102, 102, 102); letter-spacing: -0.01px; left: 1614.6px; top: 1087px;">22 Nov</span>
<span class="t" style="font-size: 14.6px; color: rgb(102, 102, 102); letter-spacing: -0.01px; left: 1672.1px; top: 1087px;">23 Nov</span>
<span class="t" style="font-size: 14.6px; color: rgb(102, 102, 102); letter-spacing: -0.01px; left: 1729.7px; top: 1087px;">24 Nov</span>
<div style="left:1695.5px;top:1116px;width:131.3px;height:55.5px;background:#195fe8;border-radius:28px;"></div>
<svg style="left:1721.5px;top:1131.5px" width="25" height="25" viewBox="0 0 25 25"><circle cx="12.5" cy="12.5" r="11.1" fill="none" stroke="#f2f8ff" stroke-width="2.6"></circle></svg>
<span class="t" style="font-size: 16.4px; color: rgb(242, 248, 255); font-weight: 700; left: 1729.2px; top: 1137px;">?</span>
<span class="t" style="font-size: 18.9px; color: rgb(255, 255, 255); font-weight: 700; left: 1757.2px; top: 1136px; transform-origin: 0px 0px; transform: scaleX(1.026);">Aide</span>

</body></html>
